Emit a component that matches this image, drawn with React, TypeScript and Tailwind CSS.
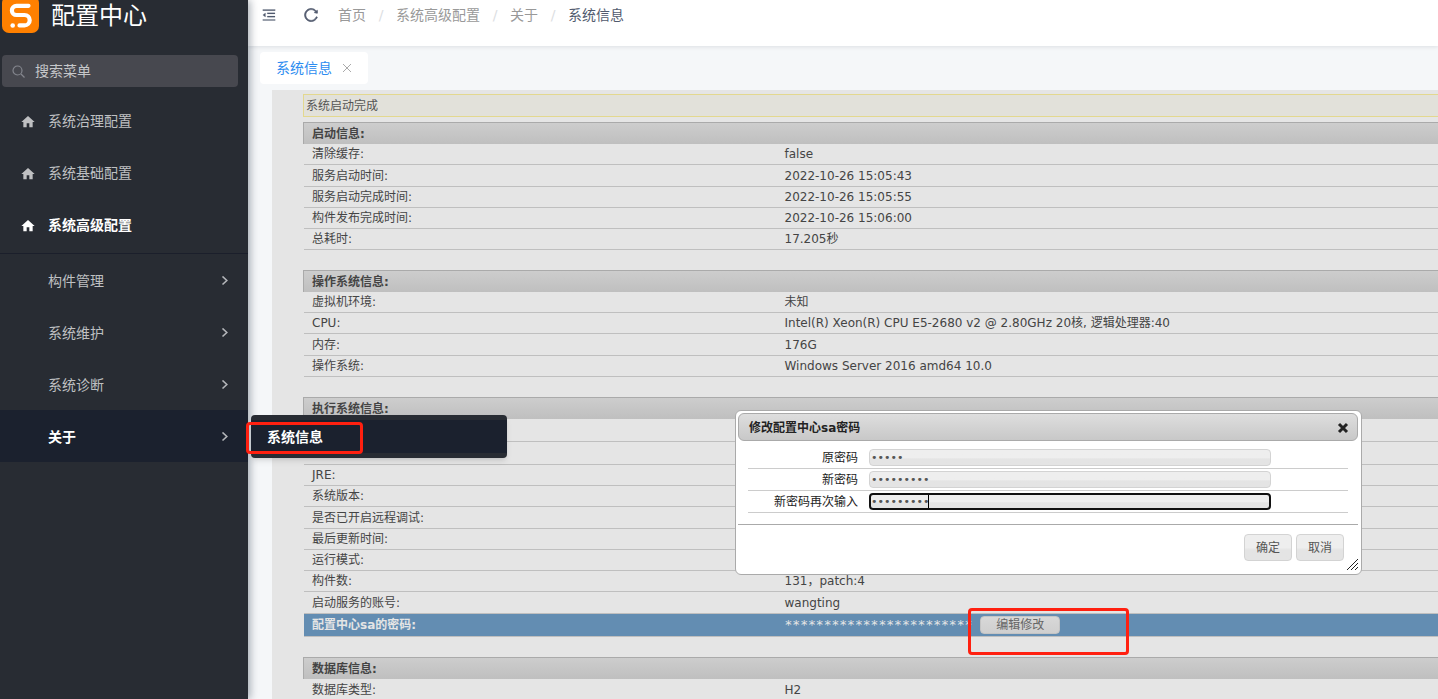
import { clsx } from 'clsx';
import { AiOutlineMenuFold, AiOutlineReload } from 'react-icons/ai';
import { MdHome } from 'react-icons/md';

type Row = {
  label: string;
  value: string;
  size?: 'mid' | 'tall';
  selected?: boolean;
};

const topMenus = [
  { name: '系统治理配置' },
  { name: '系统基础配置' },
  { name: '系统高级配置', active: true },
];

const subMenus = [
  { name: '构件管理' },
  { name: '系统维护' },
  { name: '系统诊断' },
  { name: '关于', active: true },
];

const crumbs = ['首页', '系统高级配置', '关于', '系统信息'];

const sections: { title: string; rows: Row[] }[] = [
  {
    title: '启动信息:',
    rows: [
      { label: '清除缓存:', value: 'false' },
      { label: '服务启动时间:', value: '2022-10-26 15:05:43', size: 'mid' },
      { label: '服务启动完成时间:', value: '2022-10-26 15:05:55' },
      { label: '构件发布完成时间:', value: '2022-10-26 15:06:00' },
      { label: '总耗时:', value: '17.205秒' },
    ],
  },
  {
    title: '操作系统信息:',
    rows: [
      { label: '虚拟机环境:', value: '未知' },
      { label: 'CPU:', value: 'Intel(R) Xeon(R) CPU E5-2680 v2 @ 2.80GHz 20核, 逻辑处理器:40' },
      { label: '内存:', value: '176G', size: 'mid' },
      { label: '操作系统:', value: 'Windows Server 2016 amd64 10.0' },
    ],
  },
  {
    title: '执行系统信息:',
    rows: [
      { label: '', value: '', size: 'tall' },
      { label: '', value: '', size: 'tall' },
      { label: 'JRE:', value: '' },
      { label: '系统版本:', value: '' },
      { label: '是否已开启远程调试:', value: '', size: 'mid' },
      { label: '最后更新时间:', value: '' },
      { label: '运行模式:', value: '' },
      { label: '构件数:', value: '131，patch:4' },
      { label: '启动服务的账号:', value: 'wangting', size: 'mid' },
      { label: '配置中心sa的密码:', value: '************************', size: 'tall', selected: true },
    ],
  },
  {
    title: '数据库信息:',
    rows: [{ label: '数据库类型:', value: 'H2', size: 'mid' }],
  },
];

const fields = [
  { id: 'old', label: '原密码', value: '12345' },
  { id: 'new', label: '新密码', value: '123456789' },
  { id: 'again', label: '新密码再次输入', value: '123456789', focused: true },
];

const Logo = () => (
  <svg width="37" height="33" viewBox="0 0 37 33" className="shrink-0">
    <rect x="0" y="-4" width="37" height="37" rx="7" fill="#ff8000" />
    <path
      d="M26.500 5.800H14.500a4.600 4.600 0 0 0 0 9.200H22.500a5.200 5.200 0 0 1 0 10.400H17.500"
      fill="none"
      stroke="#fff"
      strokeWidth="4.200"
      strokeLinecap="round"
      strokeLinejoin="round"
    />
    <circle cx="10.700" cy="25.500" r="2.300" fill="#fff" />
  </svg>
);

const Chevron = () => (
  <svg width="8" height="10" viewBox="0 0 8 10" fill="none" stroke="#b4b6ba" strokeWidth="1.600">
    <path d="M1.500 0.500L5.800 4.500L1.500 8.500" />
  </svg>
);

const Sidebar = () => (
  <aside className="relative z-10 w-[248px] shrink-0 bg-[#282c33] shadow-[2px_0_8px_rgba(0,21,41,0.35)]">
    <div className="flex h-[33px] items-start gap-3 pl-0.5">
      <Logo />
      <h1 className="text-2xl leading-8 text-white">配置中心</h1>
    </div>
    <label className="mt-[22px] mr-2.5 ml-0.5 flex h-8 items-center gap-2.5 rounded bg-[#47484f] pl-2.5">
      <svg width="13" height="13" viewBox="0 0 13 13" fill="none" stroke="#84868e" strokeWidth="1.200" className="shrink-0">
        <circle cx="5.500" cy="5.500" r="4.500" />
        <path d="M9 9L12.500 12.500" />
      </svg>
      <input
        aria-label="搜索菜单"
        placeholder="搜索菜单"
        className="w-full bg-transparent text-sm text-white outline-none placeholder:text-[#c6c7ca]"
      />
    </label>
    <nav className="mt-2 text-sm">
      <ul className="border-b border-[#1b1f2b] pb-0.5">
        {topMenus.map(m => (
          <li key={m.name}>
            <a
              href="#"
              className={clsx('flex h-[52px] items-center gap-3 pl-5', m.active ? 'font-bold text-white' : 'text-[#bfc0c2]')}
            >
              <MdHome className="mt-0.5 h-4 w-4" />
              {m.name}
            </a>
          </li>
        ))}
      </ul>
      <ul>
        {subMenus.map(m => (
          <li key={m.name}>
            <a
              href="#"
              className={clsx(
                'flex h-[52px] items-center justify-between pt-px pr-[19px] pl-12',
                m.active ? 'bg-[#1b212e] font-bold text-white' : 'text-[#bfc0c2]'
              )}
            >
              {m.name}
              <Chevron />
            </a>
          </li>
        ))}
      </ul>
    </nav>
  </aside>
);

const SectionTable = ({ title, rows }: { title: string; rows: Row[] }) => (
  <section className="mb-5">
    <h2 className="h-[22px] border-t border-l border-[#aaa] bg-linear-to-b from-[#cdcdcd] to-[#bfbfbf] pl-2 leading-[22px] font-bold text-[#444]">
      {title}
    </h2>
    <table className="w-full table-fixed border-separate border-spacing-0 pl-px">
      <tbody>
        {rows.map((row, i) => (
          <tr
            key={i}
            className={clsx(
              row.size === 'tall' ? 'h-[23px]' : row.size === 'mid' ? 'h-[22px]' : 'h-[21px]',
              row.selected && 'bg-[#638db2] text-[#e5e5e5]'
            )}
          >
            <th
              scope="row"
              className={clsx('w-5/12 border-b border-[#bfbfbf] p-0 pl-2 text-left', row.selected ? 'font-bold' : 'font-normal')}
            >
              {row.label}
            </th>
            <td className="border-b border-[#bfbfbf] p-0 pl-2">
              {row.selected ? (
                <div className="flex items-center gap-2">
                  <span className="font-['DejaVu_Sans_Mono',monospace] text-[13px]">{row.value}</span>
                  <button className="h-[18px] w-20 rounded border border-[#c4c4c4] bg-linear-to-b from-[#d8d8d8] to-[#cfcfcf] leading-4 text-[#666]">
                    编辑修改
                  </button>
                </div>
              ) : (
                row.value
              )}
            </td>
          </tr>
        ))}
      </tbody>
    </table>
  </section>
);

const PasswordDialog = () => (
  <div
    role="dialog"
    aria-labelledby="dlg-title"
    className="absolute top-[410px] left-[735px] z-20 w-[627px] rounded-md border border-[#aaa] bg-white py-0.5 pr-[3px] pl-0.5 text-xs leading-4 text-[#222]"
  >
    <div className="flex h-7 items-center justify-between rounded-md border border-[#aaa] bg-linear-to-b from-[#dedede] to-[#c8c8c8] pt-px pr-2 pl-2.5">
      <h2 id="dlg-title" className="font-bold">修改配置中心sa密码</h2>
      <button aria-label="关闭">
        <svg width="12" height="12" viewBox="0 0 12 12" stroke="#222" strokeWidth="3">
          <path d="M2 2L10 10M10 2L2 10" />
        </svg>
      </button>
    </div>
    <form className="mx-2.5 mt-1.5">
      {fields.map(f => (
        <div key={f.id} className="flex h-[22px] items-center gap-[11px] border-b border-[#ccc]">
          <label htmlFor={f.id} className="w-[110px] text-right">{f.label}</label>
          <div className="relative flex w-[402px]">
            <input
              id={f.id}
              type="password"
              defaultValue={f.value}
              className={clsx(
                "h-[17px] w-full rounded bg-linear-to-b from-[#eee] from-50% to-[#e4e4e4] to-60% font-['DejaVu_Sans',sans-serif] text-[11px] text-[#555] outline-none",
                f.focused ? 'border-2 border-[#111]' : 'border border-[#d3d3d3] pl-px'
              )}
            />
            {f.focused && <span className="absolute top-0.5 left-[59px] h-[13px] w-px bg-black" />}
          </div>
        </div>
      ))}
    </form>
    <div className="relative mt-[11px] flex h-12 justify-end gap-1 border-t border-[#aaa] pt-[9px] pr-3.5">
      {['确定', '取消'].map(t => (
        <button
          key={t}
          type="button"
          className="h-[27px] w-12 rounded border border-[#d3d3d3] bg-linear-to-b from-[#eee] from-50% to-[#e4e4e4] to-60% text-[#555]"
        >
          {t}
        </button>
      ))}
      <svg width="11" height="11" viewBox="0 0 11 11" stroke="#222" className="absolute right-0 bottom-0.5">
        <path d="M0 11L11 0M4 11L11 4M8 11L11 8" />
      </svg>
    </div>
  </div>
);

const App = () => {
  return (
    <div className="relative flex h-screen overflow-hidden bg-[#f5f7f9] font-['DejaVu_Sans','Noto_Sans_CJK_SC',sans-serif]">
      <Sidebar />
      <main className="min-w-0 flex-1">
        <header className="flex h-[46px] items-start bg-white pt-1 pl-[13px] text-sm text-[#515a6e] shadow-[0_1px_4px_rgba(0,21,41,0.1)]">
          <button aria-label="收起菜单" className="mt-[3px] mr-[26px]">
            <AiOutlineMenuFold className="h-4 w-4" strokeWidth={10} />
          </button>
          <button aria-label="刷新" className="mt-[3px] mr-[19px]">
            <AiOutlineReload className="h-4 w-4" strokeWidth={45} />
          </button>
          <ol className="flex leading-[22px] text-[#999]">
            {crumbs.map((c, i) => (
              <li key={c} className="flex">
                {i > 0 && <span className="w-[30px] text-center text-[#dcdee2]">/</span>}
                {i === crumbs.length - 1 ? <span className="text-[#515a6e]">{c}</span> : <a href="#">{c}</a>}
              </li>
            ))}
          </ol>
        </header>
        <div className="px-3 py-1.5">
          <div className="flex h-8 w-[108px] items-center gap-2.5 rounded-sm bg-white pl-4 text-sm text-[#2d8cf0]">
            <span>系统信息</span>
            <button aria-label="关闭标签">
              <svg width="10" height="10" viewBox="0 0 10 10" stroke="#aaa">
                <path d="M1 1L9 9M9 1L1 9" />
              </svg>
            </button>
          </div>
        </div>
        <div className="ml-6 bg-[#e5e5e5] pt-1 pl-[31px] text-xs leading-4 text-[#444]">
          <p className="mb-[5px] h-[23px] border border-r-0 border-[#e3d88f] bg-[#e2e1da] pl-0.5 leading-[22px] text-[#555]">
            系统启动完成
          </p>
          {sections.map(s => (
            <SectionTable key={s.title} title={s.title} rows={s.rows} />
          ))}
        </div>
      </main>

      {/* flyout of the 关于 menu */}
      <div className="absolute top-[415px] left-[251px] z-20 w-64 rounded bg-[#282c33] py-[5px] shadow-md">
        <a href="#" className="block h-[33px] bg-[#1b212e] pl-4 text-sm leading-[34px] font-bold text-white">
          系统信息
        </a>
      </div>
      <PasswordDialog />

      {/* highlight frames */}
      <div className="absolute top-[422px] left-[246px] z-30 h-8 w-[117px] rounded-sm border-3 border-[#ff2010]" />
      <div className="absolute top-[608px] left-[968px] z-30 h-[47px] w-[161px] rounded-sm border-3 border-[#ff2010]" />
    </div>
  );
};

export default App;
